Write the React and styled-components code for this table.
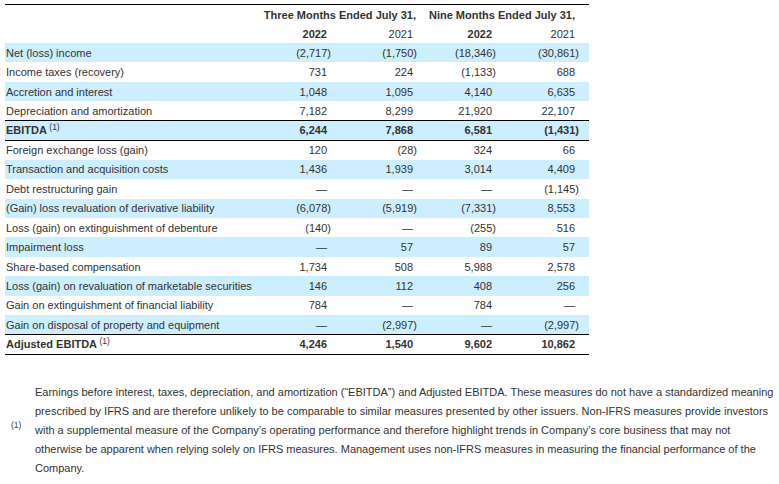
import React from "react";
import styled, { createGlobalStyle } from "styled-components";

const Global = createGlobalStyle`
  html, body { margin: 0; padding: 0; background: #fff; }
  body { font-family: "Liberation Sans", Arial, sans-serif; color: #333; }
`;

const Page = styled.div`
  padding: 4px 0 0 5px;
  width: 774px;
`;

const Table = styled.table`
  width: 584px;
  table-layout: fixed;
  border-collapse: collapse;
  font-size: 11px;
  border-top: 1px solid #000;
  border-bottom: 1px solid #000;
`;

const Col = styled.col`
  width: ${(p) => p.$w}px;
`;

const HeadRow = styled.tr`
  height: 19px;
  &:last-child td { border-bottom: 2px solid #000; }
`;

const HeadCell = styled.td`
  padding: 0 ${(p) => p.$pr ?? 4}px 0 0;
  text-align: right;
  font-weight: ${(p) => (p.$bold ? "bold" : "normal")};
  white-space: nowrap;
  color: #333;
  height: 19px;
  vertical-align: middle;
`;

const Row = styled.tr`
  height: 19.45px;
  background: ${(p) => (p.$shade ? "#cceeff" : "#ffffff")};
  font-weight: ${(p) => (p.$total ? "bold" : "normal")};
  ${(p) =>
    p.$total
      ? `td { border-top: 1px solid #000; border-bottom: 1px solid #000; }`
      : ""}
`;

const Label = styled.td`
  padding: 0 0 0 1px;
  white-space: nowrap;
  vertical-align: middle;
  color: #333;
`;

const Num = styled.td`
  padding: 0 ${(p) => p.$pr}px 0 0;
  text-align: right;
  white-space: nowrap;
  vertical-align: middle;
  color: #333;
`;

const Paren = styled.span`
  margin-right: -4px;
`;

const Sup = styled.sup`
  font-size: 8.5px;
  font-weight: normal;
  vertical-align: 4px;
  line-height: 0;
`;

const Footnote = styled.div`
  display: flex;
  align-items: center;
  margin-top: 28px;
  padding-left: 6px;
`;

const Marker = styled.div`
  width: 24px;
  font-size: 8.5px;
  color: #444;
  margin-top: -10px;
`;

const NoteText = styled.p`
  margin: 0;
  width: 741px;
  font-size: 11px;
  line-height: 19px;
  color: #333;
`;

const PR = [4, 4, 4, 14];

const rows = [
  ["Net (loss) income", ["(2,717)", "(1,750)", "(18,346)", "(30,861)"]],
  ["Income taxes (recovery)", ["731", "224", "(1,133)", "688"]],
  ["Accretion and interest", ["1,048", "1,095", "4,140", "6,635"]],
  ["Depreciation and amortization", ["7,182", "8,299", "21,920", "22,107"]],
  ["EBITDA", ["6,244", "7,868", "6,581", "(1,431)"], true],
  ["Foreign exchange loss (gain)", ["120", "(28)", "324", "66"]],
  ["Transaction and acquisition costs", ["1,436", "1,939", "3,014", "4,409"]],
  ["Debt restructuring gain", ["—", "—", "—", "(1,145)"]],
  ["(Gain) loss revaluation of derivative liability", ["(6,078)", "(5,919)", "(7,331)", "8,553"]],
  ["Loss (gain) on extinguishment of debenture", ["(140)", "—", "(255)", "516"]],
  ["Impairment loss", ["—", "57", "89", "57"]],
  ["Share-based compensation", ["1,734", "508", "5,988", "2,578"]],
  ["Loss (gain) on revaluation of marketable securities", ["146", "112", "408", "256"]],
  ["Gain on extinguishment of financial liability", ["784", "—", "784", "—"]],
  ["Gain on disposal of property and equipment", ["—", "(2,997)", "—", "(2,997)"]],
  ["Adjusted EBITDA", ["4,246", "1,540", "9,602", "10,862"], true],
];

function Value({ v }) {
  if (v.endsWith(")")) {
    return (
      <>
        {v.slice(0, -1)}
        <Paren>)</Paren>
      </>
    );
  }
  return v;
}

export default function App() {
  return (
    <>
      <Global />
      <Page>
        <Table>
          <colgroup>
            <Col $w={245} />
            <Col $w={81} />
            <Col $w={86} />
            <Col $w={79} />
            <Col $w={93} />
          </colgroup>
          <tbody>
            <HeadRow>
              <HeadCell />
              <HeadCell colSpan={2} $bold $pr={1}>
                Three Months Ended July 31,
              </HeadCell>
              <HeadCell colSpan={2} $bold $pr={14}>
                Nine Months Ended July 31,
              </HeadCell>
            </HeadRow>
            <HeadRow>
              <HeadCell />
              <HeadCell $bold>2022</HeadCell>
              <HeadCell>2021</HeadCell>
              <HeadCell $bold>2022</HeadCell>
              <HeadCell $pr={14}>2021</HeadCell>
            </HeadRow>
            {rows.map(([label, vals, total], i) => (
              <Row key={label} $shade={i % 2 === 0 && label !== "Adjusted EBITDA"} $total={total}>
                <Label>
                  {label}
                  {total && <Sup> (1)</Sup>}
                </Label>
                {vals.map((v, j) => (
                  <Num key={j} $pr={PR[j]}>
                    <Value v={v} />
                  </Num>
                ))}
              </Row>
            ))}
          </tbody>
        </Table>
        <Footnote>
          <Marker>(1)</Marker>
          <NoteText>
            Earnings before interest, taxes, depreciation, and amortization (“EBITDA”) and Adjusted EBITDA. These measures do not have a standardized meaning prescribed by IFRS and are therefore unlikely to be comparable to similar measures presented by other issuers. Non-IFRS measures provide investors with a supplemental measure of the Company’s operating performance and therefore highlight trends in Company’s core business that may not otherwise be apparent when relying solely on IFRS measures. Management uses non-IFRS measures in measuring the financial performance of the Company.
          </NoteText>
        </Footnote>
      </Page>
    </>
  );
}
